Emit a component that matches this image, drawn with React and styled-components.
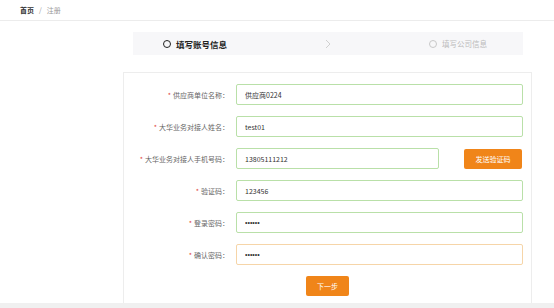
import styled, { createGlobalStyle } from "styled-components";

const Global = createGlobalStyle`
  html, body {
    margin: 0;
    padding: 0;
    background: #fff;
    font-family: "Noto Sans CJK SC", "Noto Sans", sans-serif;
  }
`;

const Page = styled.div`
  width: 554px;
  height: 308px;
  overflow: hidden;
  display: flex;
  flex-direction: column;
`;

const Crumbs = styled.div`
  height: 21px;
  border-bottom: 1px solid #ececec;
  display: flex;
  align-items: center;
  gap: 5px;
  padding-left: 20px;
  font-size: 7px;
  color: #999;
`;

const CrumbHome = styled.span`
  color: #333;
  font-weight: 700;
`;

const Main = styled.div`
  flex: 1;
  display: flex;
  flex-direction: column;
`;

const Steps = styled.div`
  margin: 11px 0 0 133px;
  width: 390px;
  height: 23px;
  background: #f7f7f9;
  display: flex;
  align-items: center;
`;

const Step = styled.div`
  display: flex;
  align-items: center;
  gap: 5px;
  font-size: ${(p) => (p.$active ? "8.5px" : "7.5px")};
  font-weight: ${(p) => (p.$active ? 700 : 400)};
  color: ${(p) => (p.$active ? "#222" : "#bbb")};
  margin-left: ${(p) => p.$left}px;
`;

const Dot = styled.span`
  width: 6px;
  height: 6px;
  border-radius: 50%;
  border: 1.5px solid ${(p) => (p.$active ? "#222" : "#c8c8c8")};
`;

const Card = styled.div`
  margin: 17px 0 0 123px;
  width: 407px;
  border: 1px solid #ededed;
  border-bottom: none;
  padding: 11px 0 7px;
  display: flex;
  flex-direction: column;
  gap: 11px;
`;

const Row = styled.div`
  display: flex;
  align-items: center;
  height: 21px;
`;

const Label = styled.label`
  width: 105px;
  text-align: right;
  font-size: 7px;
  color: #666;
  white-space: nowrap;
  margin-right: 7px;
`;

const Star = styled.span`
  color: #e0453a;
  margin-right: 2px;
`;

const Input = styled.input`
  box-sizing: border-box;
  width: ${(p) => p.$w || 287}px;
  height: 21px;
  border: 1px solid ${(p) => (p.$warn ? "#f6d5a8" : "#b9e0a8")};
  border-radius: 2px;
  padding: 0 8px;
  font-size: 7px;
  color: #333;
  font-family: inherit;
  outline: none;
  background: #fff;

  &[type="password"] {
    font-family: "Liberation Sans", sans-serif;
    font-size: 7px;
  }
`;

const Button = styled.button`
  height: 20px;
  padding: 0;
  width: ${(p) => p.$w}px;
  margin-left: ${(p) => p.$ml || 0}px;
  background: #f08519;
  border: none;
  border-radius: 2px;
  color: #fff;
  font-size: 7px;
  font-family: inherit;
`;

const Actions = styled.div`
  display: flex;
  justify-content: flex-start;
  padding-left: 182px;
`;

const Footer = styled.div`
  height: 5px;
  background: #f0f0f0;
`;

const Chevron = () => (
  <svg width="6" height="10" viewBox="0 0 6 10" style={{ marginLeft: 98 }}>
    <polyline points="1,1 5,5 1,9" fill="none" stroke="#d0d0d0" strokeWidth="1" />
  </svg>
);

const fields = [
  { label: "供应商单位名称：", value: "供应商0224" },
  { label: "大华业务对接人姓名：", value: "test01" },
  { label: "大华业务对接人手机号码：", value: "13805111212", send: true },
  { label: "验证码：", value: "123456" },
  { label: "登录密码：", value: "123456", pw: true },
  { label: "确认密码：", value: "123456", pw: true, warn: true },
];

export default function App() {
  return (
    <Page>
      <Global />
      <Crumbs>
        <CrumbHome>首页</CrumbHome>
        <span>/</span>
        <span>注册</span>
      </Crumbs>
      <Main>
        <Steps>
          <Step $active $left={30}>
            <Dot $active />
            填写账号信息
          </Step>
          <Chevron />
          <Step $left={98}>
            <Dot />
            填写公司信息
          </Step>
        </Steps>
        <Card>
          {fields.map((f) => (
            <Row key={f.label}>
              <Label>
                <Star>*</Star>
                {f.label}
              </Label>
              <Input
                readOnly
                type={f.pw ? "password" : "text"}
                value={f.value}
                $w={f.send ? 203 : 287}
                $warn={f.warn}
              />
              {f.send && (
                <Button $w={58} $ml={25}>
                  发送验证码
                </Button>
              )}
            </Row>
          ))}
          <Actions>
            <Button $w={43}>下一步</Button>
          </Actions>
        </Card>
        <div style={{ flex: 1 }} />
        <Footer />
      </Main>
    </Page>
  );
}
